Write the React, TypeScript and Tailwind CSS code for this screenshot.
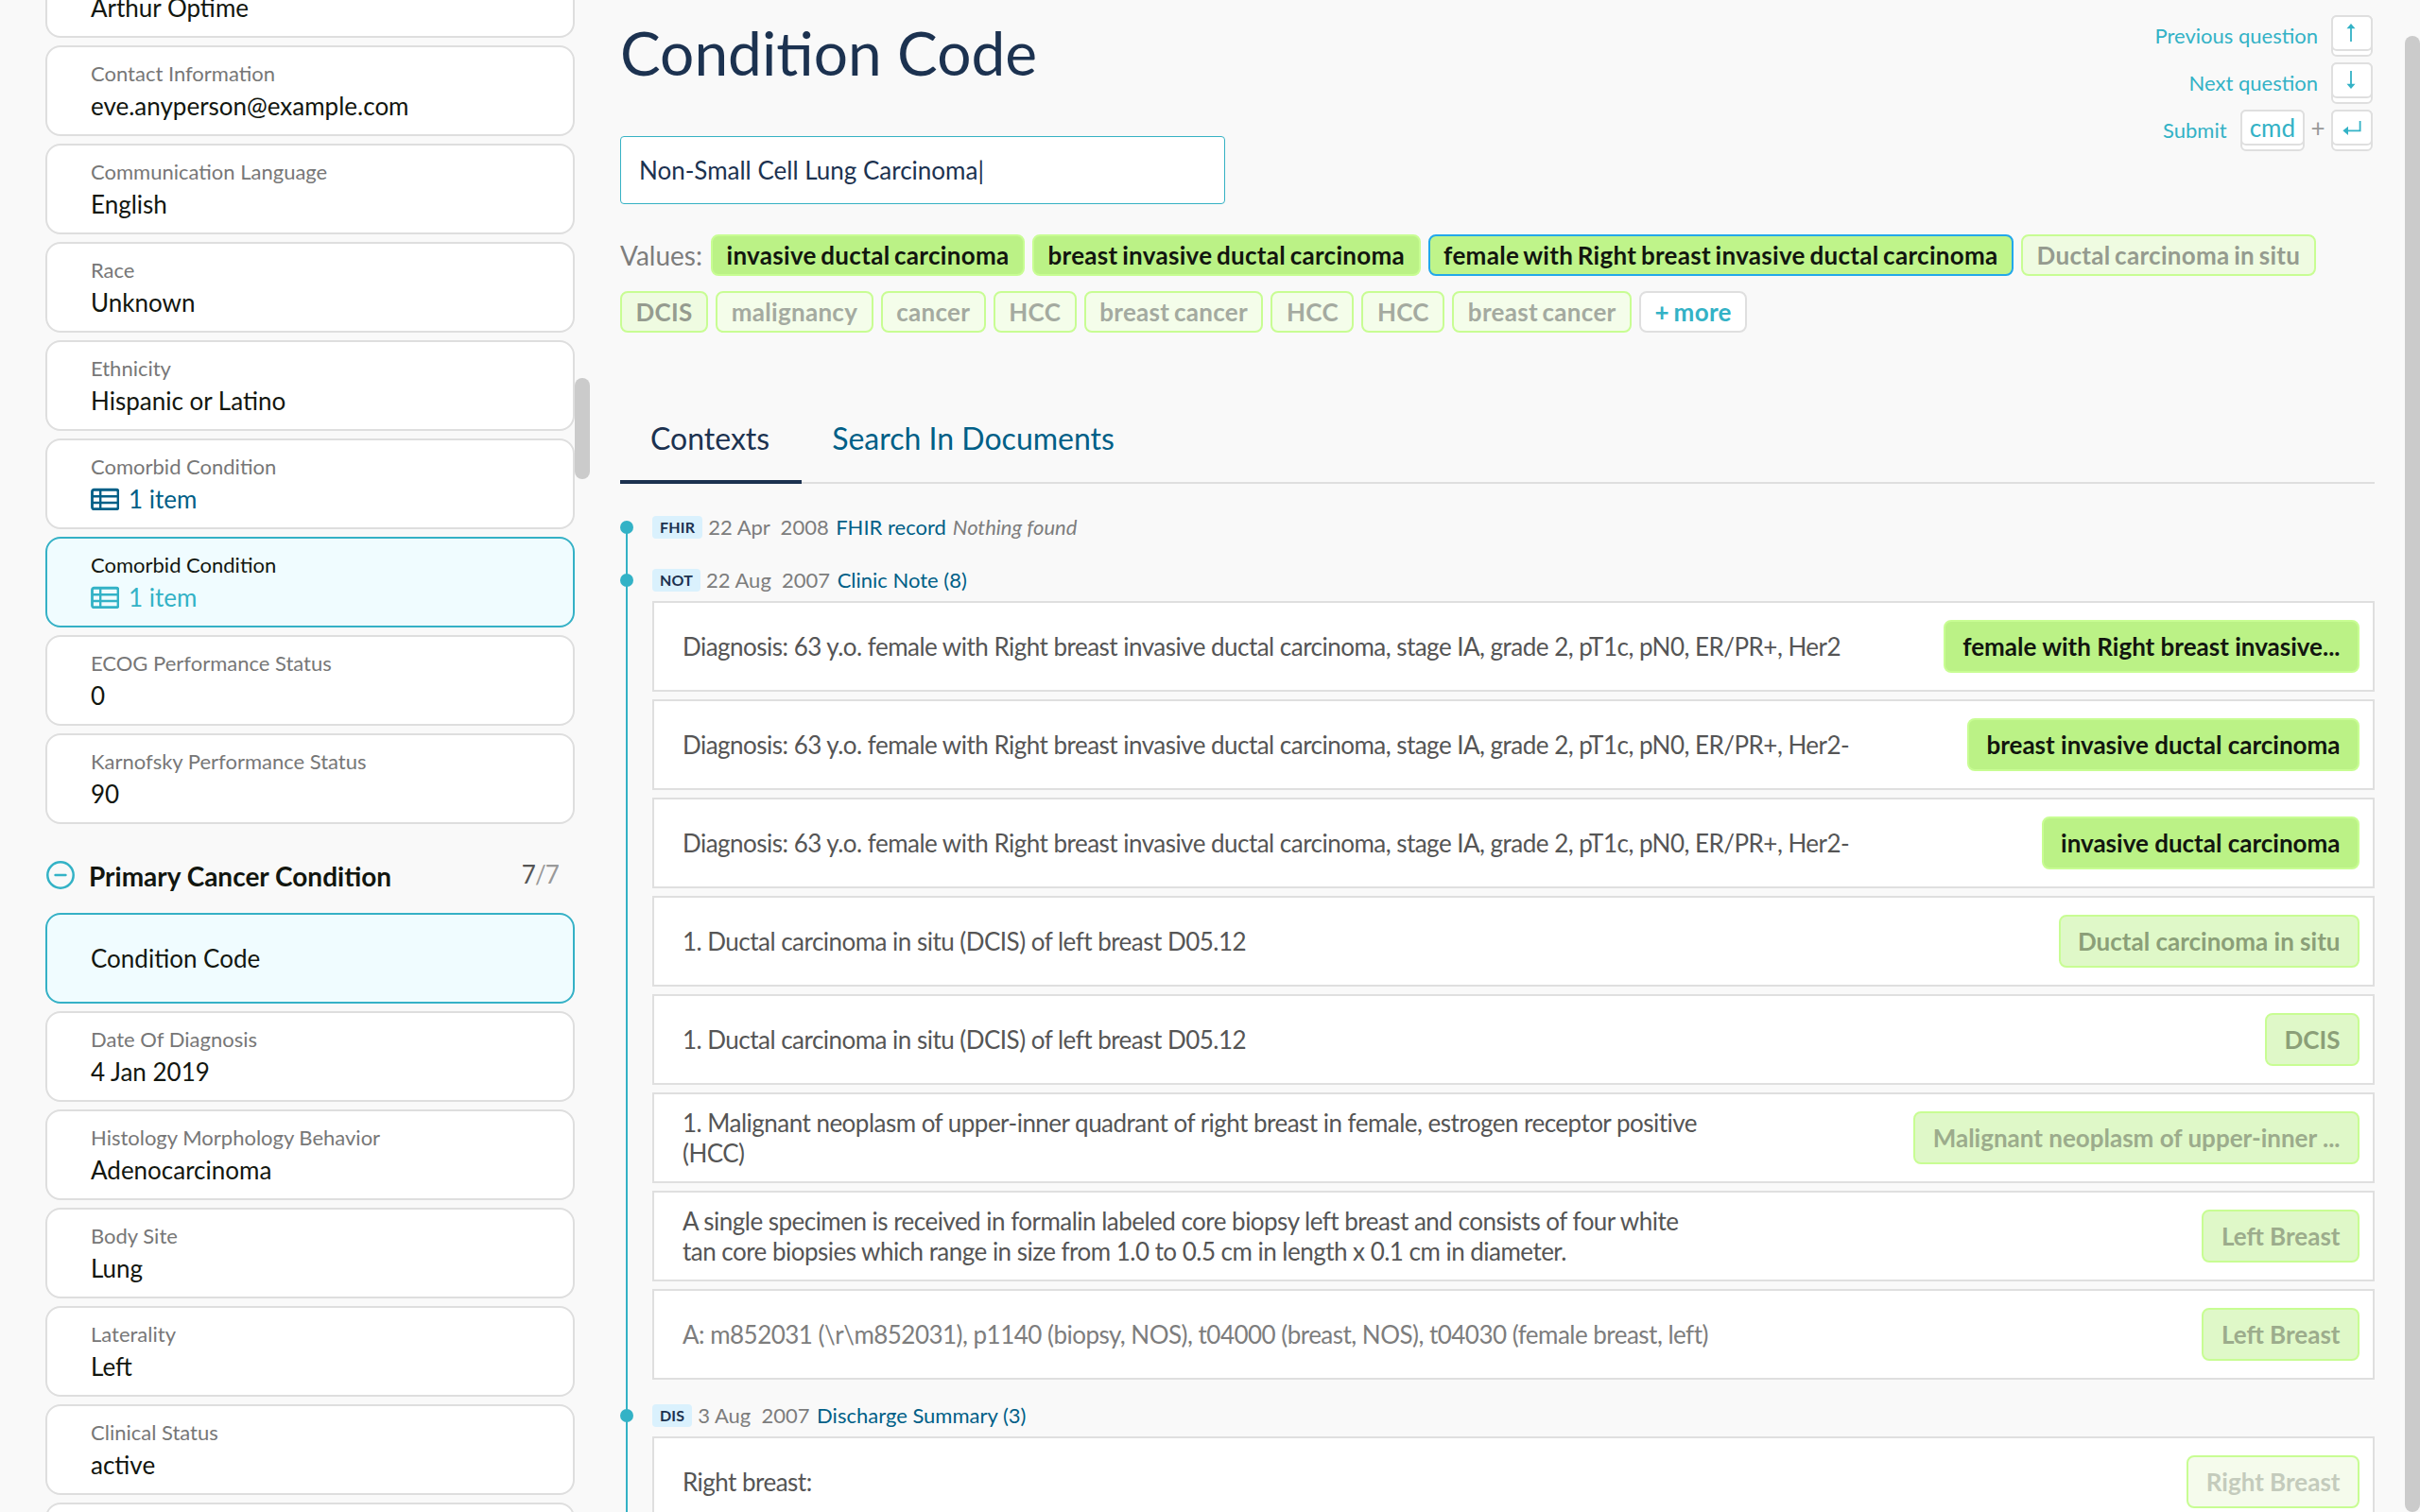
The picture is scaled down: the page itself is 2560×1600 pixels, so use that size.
import React, { useState } from 'react';
import clsx from 'clsx';

interface Field {
  label: string;
  value?: string;
  list?: boolean;
  active?: boolean;
}

interface Tag {
  text: string;
  tone: string;
}

interface ContextRow {
  text: string;
  muted?: boolean;
  tag: Tag;
}

interface Source {
  code: string;
  date: string;
  title: string;
  note?: string;
  rows: ContextRow[];
}

const patientFields: Field[] = [
  { label: 'Name', value: 'Arthur Optime' },
  { label: 'Contact Information', value: 'eve.anyperson@example.com' },
  { label: 'Communication Language', value: 'English' },
  { label: 'Race', value: 'Unknown' },
  { label: 'Ethnicity', value: 'Hispanic or Latino' },
  { label: 'Comorbid Condition', value: '1 item', list: true },
  { label: 'Comorbid Condition', value: '1 item', list: true, active: true },
  { label: 'ECOG Performance Status', value: '0' },
  { label: 'Karnofsky Performance Status', value: '90' },
];

const cancerFields: Field[] = [
  { label: 'Condition Code', active: true },
  { label: 'Date Of Diagnosis', value: '4 Jan 2019' },
  { label: 'Histology Morphology Behavior', value: 'Adenocarcinoma' },
  { label: 'Body Site', value: 'Lung' },
  { label: 'Laterality', value: 'Left' },
  { label: 'Clinical Status', value: 'active' },
  { label: '' },
];

const solid = 'bg-[#bbf286] border-[#c8fd93] text-[#12160f]';
const focused = 'bg-[#bff48a] border-[#22a8ea] text-[#12160f]';
const faded = 'bg-[#effbe1] border-[#c8fd93] text-[#959b8f]';
const fainter = 'bg-[#f4fdea] border-[#c8fd93] text-[#a4aaa0]';
const rowFaded = 'bg-[#dff8c8] border-[#c8fd93] text-[#8b9f78]';
const rowFainter = 'bg-[#dff8c8] border-[#c8fd93] text-[#9cac8c]';
const rowGhost = 'bg-[#f5fbec] border-[#c8fd93] text-[#c4cbbc]';

const values: Tag[] = [
  { text: 'invasive ductal carcinoma', tone: solid },
  { text: 'breast invasive ductal carcinoma', tone: solid },
  { text: 'female with Right breast invasive ductal carcinoma', tone: focused },
  { text: 'Ductal carcinoma in situ', tone: faded },
  { text: 'DCIS', tone: faded },
  { text: 'malignancy', tone: fainter },
  { text: 'cancer', tone: fainter },
  { text: 'HCC', tone: fainter },
  { text: 'breast cancer', tone: fainter },
  { text: 'HCC', tone: fainter },
  { text: 'HCC', tone: fainter },
  { text: 'breast cancer', tone: fainter },
  { text: '+ more', tone: 'bg-white border-[#dfdfdf] text-[#33b2c6]' },
];

const diagnosis =
  'Diagnosis: 63 y.o. female with Right breast invasive ductal carcinoma, stage IA, grade 2, pT1c, pN0, ER/PR+, Her2';

const sources: Source[] = [
  { code: 'FHIR', date: '22 Apr  2008', title: 'FHIR record', note: 'Nothing found', rows: [] },
  {
    code: 'NOT',
    date: '22 Aug  2007',
    title: 'Clinic Note (8)',
    rows: [
      { text: diagnosis, tag: { text: 'female with Right breast invasive...', tone: solid } },
      { text: `${diagnosis}-`, tag: { text: 'breast invasive ductal carcinoma', tone: solid } },
      { text: `${diagnosis}-`, tag: { text: 'invasive ductal carcinoma', tone: solid } },
      {
        text: '1. Ductal carcinoma in situ (DCIS) of left breast D05.12',
        tag: { text: 'Ductal carcinoma in situ', tone: rowFaded },
      },
      {
        text: '1. Ductal carcinoma in situ (DCIS) of left breast D05.12',
        tag: { text: 'DCIS', tone: rowFaded },
      },
      {
        text: '1. Malignant neoplasm of upper-inner quadrant of right breast in female, estrogen receptor positive\n(HCC)',
        tag: { text: 'Malignant neoplasm of upper-inner ...', tone: rowFainter },
      },
      {
        text: 'A single specimen is received in formalin labeled core biopsy left breast and consists of four white\ntan core biopsies which range in size from 1.0 to 0.5 cm in length x 0.1 cm in diameter.',
        tag: { text: 'Left Breast', tone: rowFainter },
      },
      {
        text: 'A: m852031 (\\r\\m852031), p1140 (biopsy, NOS), t04000 (breast, NOS), t04030 (female breast, left)',
        muted: true,
        tag: { text: 'Left Breast', tone: rowFainter },
      },
    ],
  },
  {
    code: 'DIS',
    date: '3 Aug  2007',
    title: 'Discharge Summary (3)',
    rows: [{ text: 'Right breast:', tag: { text: 'Right Breast', tone: rowGhost } }],
  },
];

const TableIcon = () => (
  <svg width="30" height="24" viewBox="0 -1 30 24" fill="none" stroke="currentColor" className="shrink-0">
    <rect x="1.5" y="1.25" width="27.5" height="20.5" rx="2" strokeWidth="2.8" />
    <path d="M10.2 1v21M1 8.2h28M1 15h28" strokeWidth="2.4" />
  </svg>
);

const FieldCard = ({ field }: { field: Field }) => (
  <div
    className={clsx(
      'flex h-24 shrink-0 flex-col justify-center rounded-2xl border-2 pl-[46px]',
      field.active ? 'border-[#35b1c6] bg-[#f0fcff]' : 'border-[#dedede] bg-white'
    )}
  >
    {field.value ? (
      <>
        <div className={clsx('text-[22px] leading-8', field.active ? 'text-[#12160f]' : 'text-[#777777]')}>
          {field.label}
        </div>
        <div
          className={clsx(
            'flex items-center gap-2.5 text-[26px] leading-9',
            !field.list && 'text-[#12160f]',
            field.list && (field.active ? 'text-[#33b2c6]' : 'text-[#005f87]')
          )}
        >
          {field.list && <TableIcon />}
          {field.value}
        </div>
      </>
    ) : (
      <div className="text-[26px] leading-9 text-[#12160f]">{field.label}</div>
    )}
  </div>
);

const Sidebar = () => (
  <aside className="flex w-[624px] shrink-0 overflow-hidden pl-12">
    <div className="-mt-14 flex w-[560px] shrink-0 flex-col gap-2">
      {patientFields.map((field, i) => (
        <FieldCard key={i} field={field} />
      ))}
      <div className="flex h-[78px] shrink-0 items-center pt-3.5">
        <svg width="32" height="32" viewBox="0 0 32 32" fill="none" stroke="#33b2c6" strokeLinecap="round" className="shrink-0">
          <circle cx="16" cy="16" r="13.7" strokeWidth="2.5" />
          <path d="M10.5 16h11" strokeWidth="2.4" />
        </svg>
        <h2 className="ml-3.5 pt-0.5 text-[28px] leading-9 font-bold text-[#12160f]">Primary Cancer Condition</h2>
        <span className="mr-[17px] ml-auto pb-0.5 text-[26px] leading-9 tracking-[-0.9px] text-[#999999]">
          <span className="text-[#555555]">7</span>/7
        </span>
      </div>
      {cancerFields.map((field, i) => (
        <FieldCard key={i} field={field} />
      ))}
    </div>
    <div className="mt-[400px] h-[107px] w-4 shrink-0 rounded-full bg-[#cbcbcb]" />
  </aside>
);

const Key = ({ children }: { children: React.ReactNode }) => (
  <div className="h-11 rounded-md border-2 border-[#dfdfdf] bg-white">
    <div className="-mx-0.5 -mt-0.5 flex h-[38px] min-w-11 items-center justify-center rounded-md border-2 border-[#dfdfdf] bg-white px-2 text-[26px] leading-none">
      {children}
    </div>
  </div>
);

const KeyIcon = ({ stem, head }: { stem: string; head: string }) => (
  <svg width="22" height="22" viewBox="0 0 22 22" className="-mx-1 shrink-0">
    <path d={stem} fill="none" stroke="currentColor" strokeWidth="1.8" />
    <path d={head} fill="currentColor" />
  </svg>
);

const Shortcuts = () => (
  <div className="flex flex-col items-end gap-1.5 pt-4 pr-0.5 text-[22px] leading-8 text-[#33b2c6]">
    <div className="flex items-center gap-3.5">
      Previous question
      <Key>
        <KeyIcon stem="M10 20V4" head="M5.5 6.2 10 1l4.5 5.2z" />
      </Key>
    </div>
    <div className="flex items-center gap-3.5">
      Next question
      <Key>
        <KeyIcon stem="M10 1v16" head="M5.5 14.8 10 20l4.5-5.2z" />
      </Key>
    </div>
    <div className="flex items-center">
      <span className="mr-3.5">Submit</span>
      <Key>cmd</Key>
      <span className="w-7 pb-1.5 text-center text-[26px] text-[#999999]">+</span>
      <Key>
        <KeyIcon stem="M19.6 4v10.3H5" head="M7 9.7v9.2L1.4 14.3z" />
      </Key>
    </div>
  </div>
);

const ValueTags = () => (
  <div className="mt-8 flex flex-wrap items-center gap-x-2 gap-y-4 pr-10">
    <span className="w-[88px] text-[28px] leading-[44px] text-[#7d7d7d]">Values:</span>
    {values.map((tag, i) => (
      <button
        key={i}
        className={clsx(
          'h-11 rounded-lg border-2 px-[14.5px] text-[26px] leading-[38px] font-bold tracking-[0.3px] whitespace-nowrap [word-spacing:-2px]',
          tag.tone
        )}
      >
        {tag.text}
      </button>
    ))}
  </div>
);

const SourceBlock = ({ source }: { source: Source }) => (
  <section>
    <div className="flex h-11 items-center text-[22px]">
      <span className="-ml-[34px] size-3.5 rounded-full bg-[#33b2c6]" />
      <span className="ml-5 h-6 rounded bg-[#daf1fd] px-2 text-base leading-6 font-bold tracking-[0.2px] text-[#1c3250]">
        {source.code}
      </span>
      <span className="ml-1.5 pb-0.5 whitespace-pre text-[#7d7d7d]">{source.date}</span>
      <a className="ml-[7.5px] pb-0.5 text-[#005f87]">{source.title}</a>
      {source.note && <em className="ml-[7px] pb-0.5 text-[#7d7d7d]">{source.note}</em>}
    </div>
    <div className="flex flex-col gap-2">
      {source.rows.map((row, i) => (
        <div key={i} className="flex h-24 items-center justify-between border-2 border-[#dfdfdf] bg-white pr-3.5 pl-[30px]">
          <p
            className={clsx(
              'text-[26px] leading-8 tracking-[-0.02em] whitespace-pre-line',
              row.muted ? 'text-[#7d7d7d]' : 'text-[#555555]'
            )}
          >
            {row.text}
          </p>
          <span className={clsx('h-14 rounded-lg border-2 px-[18.5px] text-[26px] leading-[52px] font-bold whitespace-nowrap', row.tag.tone)}>
            {row.tag.text}
          </span>
        </div>
      ))}
    </div>
  </section>
);

const tabs = ['Contexts', 'Search In Documents'];

export default function App() {
  const [tab, setTab] = useState('Contexts');

  return (
    <div className="flex h-[1600px] w-[2560px] overflow-hidden bg-[#f9f9f9] font-['Lato',sans-serif]">
      <Sidebar />
      <main className="flex w-[1888px] shrink-0 flex-col pl-8">
        <div className="flex h-[216px] shrink-0 justify-between">
          <div className="flex flex-col">
            <h1 className="mt-4 text-[64px] leading-[80px] text-[#1c3250]">Condition Code</h1>
            <div className="mt-12 h-[72px] w-[640px] rounded border border-[#36b2c4] bg-white pl-[19px] text-[26px] leading-[70px] text-[#1c3250]">
              Non-Small Cell Lung Carcinoma|
            </div>
          </div>
          <Shortcuts />
        </div>
        <ValueTags />
        <div className="mt-[72px] flex h-22 shrink-0 items-stretch shadow-[inset_0_-2px_0_#dfdfdf]">
          {tabs.map((name) => (
            <button
              key={name}
              onClick={() => setTab(name)}
              className={clsx(
                'border-b-4 pr-[34px] pb-[5px] pl-8 text-[32px]',
                name === tab ? 'border-[#1c3250] text-[#1c3250]' : 'border-transparent text-[#005f87]'
              )}
            >
              {name}
            </button>
          ))}
        </div>
        <div className="mt-6 flex">
          <div className="mt-[22px] ml-1.5 h-[1100px] w-0.5 shrink-0 bg-[#33b2c6]" />
          <div className="ml-[26px] flex grow flex-col gap-4 [&>section:first-child]:-mb-1">
            {sources.map((source) => (
              <SourceBlock key={source.code} source={source} />
            ))}
          </div>
        </div>
      </main>
      <div className="mt-[38px] ml-8 h-[1562px] w-4 shrink-0 rounded-full bg-[#cbcbcb]" />
    </div>
  );
}
